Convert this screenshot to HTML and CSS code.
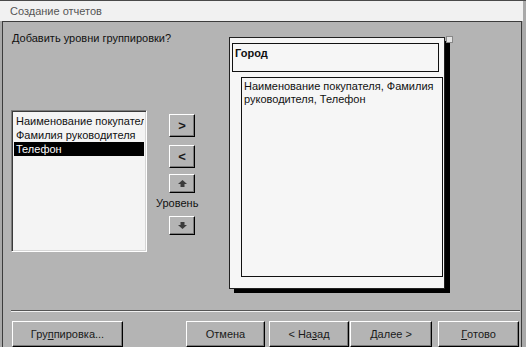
FILE: index.html
```html
<!DOCTYPE html>
<html lang="ru">
<head>
    <meta charset="UTF-8">
    <title>Создание отчетов</title>
    <link rel="stylesheet" href="styles.css">
</head>
<body>
    <div class="window">
        <div class="titlebar">Создание отчетов</div>

        <div class="client">
            <div class="main">
                <div class="left">
                    <div class="question">Добавить уровни группировки?</div>

                    <div class="picker">
                        <div class="list">
                            <div class="item">Наименование покупателя</div>
                            <div class="item">Фамилия руководителя</div>
                            <div class="item selected">Телефон</div>
                        </div>

                        <div class="movers">
                            <button class="btn move-btn">&gt;</button>
                            <button class="btn move-btn second">&lt;</button>
                            <button class="btn level-btn">
                                <svg width="9" height="7" viewBox="0 0 9 7"><path d="M4.5 0 L9 4 L6.5 4 L6.5 7 L2.5 7 L2.5 4 L0 4 Z" fill="#3a3a3a"/></svg>
                            </button>
                            <div class="level-label">Уровень</div>
                            <button class="btn level-btn">
                                <svg width="9" height="7" viewBox="0 0 9 7"><path d="M4.5 7 L9 3 L6.5 3 L6.5 0 L2.5 0 L2.5 3 L0 3 Z" fill="#3a3a3a"/></svg>
                            </button>
                        </div>
                    </div>
                </div>

                <div class="preview">
                    <div class="page">
                        <div class="group-box">Город</div>
                        <div class="detail-box">Наименование покупателя, Фамилия руководителя, Телефон</div>
                    </div>
                    <div class="corner"></div>
                </div>
            </div>

            <div class="separator"></div>

            <div class="actions">
                <button class="btn action grouping">Гру<u>п</u>пировка...</button>
                <button class="btn action cancel">Отмена</button>
                <button class="btn action back">&lt; На<u>з</u>ад</button>
                <button class="btn action next"><u>Д</u>алее &gt;</button>
                <button class="btn action finish"><u>Г</u>отово</button>
            </div>
        </div>
    </div>
</body>
</html>
```

FILE: styles.css
```css
body {
    margin: 0;
    background-color: #a9a9a9;
    font-family: "Liberation Sans", Arial, sans-serif;
    font-size: 11px;
    color: #111;
}

.window {
    width: 526px;
    height: 347px;
    overflow: hidden;
    border-top: 1px solid #4a4a4a;
    box-sizing: border-box;
}

.titlebar {
    width: 523px;
    height: 20px;
    background-color: #f1f1f1;
    color: #555;
    font-size: 11px;
    line-height: 21px;
    padding-left: 10px;
    box-sizing: border-box;
}

.client {
    margin-left: 2px;
    width: 520px;
    height: 330px;
    background-color: #b4b4b4;
    border: 1px solid #3c3c3c;
    border-bottom: none;
    box-sizing: border-box;
}

.main {
    display: flex;
    height: 288px;
}

.left {
    width: 226px;
    padding-left: 8px;
    box-sizing: border-box;
}

.question {
    margin-top: 10px;
    padding-left: 1px;
    line-height: 13px;
}

.picker {
    display: flex;
    margin-top: 65px;
}

.list {
    width: 136px;
    height: 142px;
    background-color: #f4f4f4;
    border-top: 1px solid #7c7c7c;
    border-left: 1px solid #7c7c7c;
    border-right: 1px solid #fff;
    border-bottom: 1px solid #fff;
    box-shadow: inset 1px 1px 0 #3a3a3a, inset -1px -1px 0 #d6d6d6;
    box-sizing: border-box;
    padding: 3px 2px 0 2px;
    overflow: hidden;
}

.item {
    height: 14px;
    line-height: 14px;
    padding-left: 2px;
    white-space: nowrap;
    overflow: hidden;
}

.item.selected {
    background-color: #000;
    color: #fff;
}

.movers {
    display: flex;
    flex-direction: column;
    margin-left: 8px;
    margin-top: 4px;
}

.btn {
    background-color: #b4b4b4;
    border-top: 1px solid #fff;
    border-left: 1px solid #fff;
    border-right: 1px solid #000;
    border-bottom: 1px solid #000;
    box-shadow: inset -1px -1px 0 #7a7a7a;
    font-family: "Liberation Sans", Arial, sans-serif;
    font-size: 11px;
    color: #1a1a1a;
    padding: 0;
    box-sizing: border-box;
    display: flex;
    align-items: center;
    justify-content: center;
}

.move-btn {
    width: 26px;
    height: 23px;
    margin-left: 14px;
    font-size: 13px;
    font-weight: bold;
}

.move-btn.second {
    margin-top: 8px;
}

.level-btn {
    width: 26px;
    height: 19px;
    margin-left: 14px;
    margin-top: 6px;
}

.level-label {
    line-height: 16px;
    margin-top: 2px;
    padding-left: 1px;
}

.level-label + .level-btn {
    margin-top: 5px;
}

.preview {
    position: relative;
    margin-top: 15px;
}

.page {
    width: 216px;
    height: 252px;
    background-color: #f6f6f6;
    border: 1px solid #222;
    box-shadow: 5px 4px 0 #000;
    box-sizing: border-box;
    padding: 5px 3px 0 2px;
}

.group-box {
    width: 207px;
    height: 29px;
    border: 1px solid #111;
    box-sizing: border-box;
    font-weight: bold;
    padding: 2px 0 0 2px;
    line-height: 14px;
}

.detail-box {
    width: 202px;
    height: 200px;
    margin-top: 5px;
    margin-left: 9px;
    border: 1px solid #111;
    box-sizing: border-box;
    padding: 2px 2px 0 2px;
    line-height: 13px;
}

.corner {
    position: absolute;
    top: -1px;
    left: 217px;
    width: 5px;
    height: 5px;
    background-color: #e4e4e4;
    border: 1px solid #888;
}

.separator {
    margin: 0 1px 0 8px;
    border-top: 1px solid #555;
    border-bottom: 1px solid #f0f0f0;
}

.actions {
    display: flex;
    margin-top: 9px;
    padding-left: 9px;
}

.action {
    height: 26px;
}

.grouping {
    width: 111px;
}

.cancel {
    width: 79px;
    margin-left: 63px;
}

.back {
    width: 80px;
    margin-left: 4px;
}

.next {
    width: 82px;
    margin-left: 1px;
}

.finish {
    width: 81px;
    margin-left: 6px;
}
```
